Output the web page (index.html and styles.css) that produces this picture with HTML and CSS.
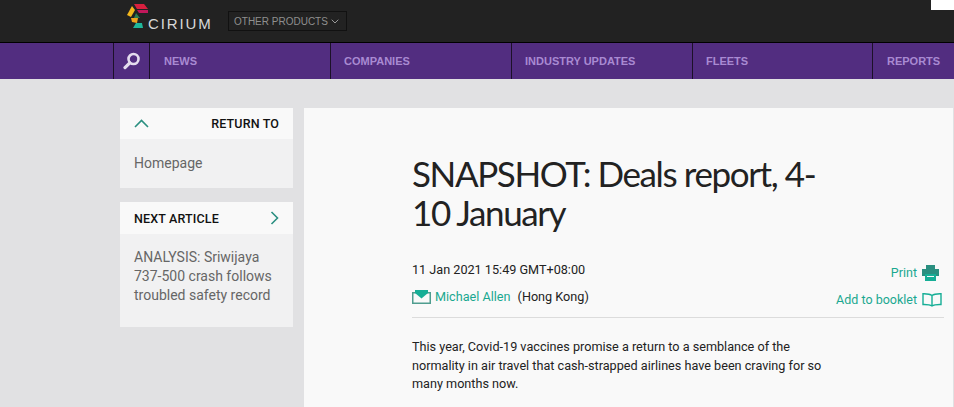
FILE: index.html
```html
<!DOCTYPE html>
<html lang="en">
<head>
  <meta charset="UTF-8" />
  <meta name="viewport" content="width=device-width, initial-scale=1" />
  <title>SNAPSHOT: Deals report, 4-10 January</title>
  <link rel="stylesheet" href="styles.css">
</head>
<body>

  <header class="topbar">
    <a class="logo">
      <svg class="logo-mark" width="22" height="25" viewBox="0 0 22 25">
        <polygon points="7,0 17,0 21,5 10,5" fill="#d8203f"/>
        <polygon points="10,6 21,6 21,9 12,9" fill="#c2185b"/>
        <polygon points="5,2 8,6 4,13 0,11" fill="#f5b81c"/>
        <polygon points="4,14 11,14 10,19 5,18" fill="#f0a31c"/>
        <polygon points="9,9 13,14 7,14" fill="#2f7d4f"/>
        <polygon points="9,19 15,19 16,24 6,24" fill="#1fb79b"/>
      </svg>
      <span class="logo-text">CIRIUM</span>
    </a>
    <div class="products">OTHER PRODUCTS
      <svg width="8" height="5" viewBox="0 0 8 5"><path d="M.7.7 4 4 7.3.7" fill="none" stroke="#999" stroke-width="1"/></svg>
    </div>
    <div class="corner-tab"></div>
  </header>

  <nav class="mainnav">
    <a class="search-cell">
      <svg width="18" height="18" viewBox="0 0 18 18">
        <circle cx="10.5" cy="7" r="5" fill="none" stroke="#e4dcee" stroke-width="2.6"/>
        <path d="M6.8 10.8 2 15.6" stroke="#e4dcee" stroke-width="3.2" stroke-linecap="round"/>
      </svg>
    </a>
    <a class="nav-item nav-news">NEWS</a>
    <a class="nav-item">COMPANIES</a>
    <a class="nav-item">INDUSTRY UPDATES</a>
    <a class="nav-item nav-fleets">FLEETS</a>
    <a class="nav-item nav-reports">REPORTS</a>
  </nav>

  <main class="page">
    <aside class="sidebar">
      <section class="side-box">
        <div class="side-head">
          <svg width="15" height="9" viewBox="0 0 15 9"><path d="M1 8 7.5 1.5 14 8" fill="none" stroke="#2a8f80" stroke-width="1.6"/></svg>
          <span>RETURN TO</span>
        </div>
        <div class="side-body">Homepage</div>
      </section>
      <section class="side-box">
        <div class="side-head next-head">
          <span>NEXT ARTICLE</span>
          <svg width="9" height="14" viewBox="0 0 9 14"><path d="M1.5 1 7.5 7 1.5 13" fill="none" stroke="#2a8f80" stroke-width="1.6"/></svg>
        </div>
        <div class="side-body next-body">ANALYSIS: Sriwijaya 737-500 crash follows troubled safety record</div>
      </section>
    </aside>

    <article class="article">
      <h1>SNAPSHOT: Deals report, 4-10 January</h1>
      <div class="meta">
        <div class="byline">
          <div class="date">11 Jan 2021 15:49 GMT+08:00</div>
          <div class="author">
            <svg width="19" height="14" viewBox="0 0 19 14">
              <rect x="0.75" y="2.75" width="17.5" height="10.5" fill="none" stroke="#4f9d8f" stroke-width="1.5"/>
              <polygon points="3,0 16,0 16,3 9.5,8.5 3,3" fill="#16ae96"/>
            </svg>
            <a class="teal">Michael Allen</a>
            <span>(Hong Kong)</span>
          </div>
        </div>
        <div class="tools">
          <a class="teal tool">Print
            <svg class="print-icon" width="17" height="16" viewBox="0 0 17 16">
              <rect x="4" y="0" width="9" height="4" fill="#2a8f80"/>
              <rect x="0" y="4" width="17" height="7" fill="#2a8f80"/>
              <rect x="3" y="9" width="11" height="7" fill="#16ae96"/>
              <rect x="5" y="11" width="7" height="1" fill="#f9f9f9"/>
            </svg>
          </a>
          <a class="teal tool">Add to booklet
            <svg width="20" height="14" viewBox="0 0 20 14">
              <path d="M10 2.5C8 1 5 .7 1 .8V11.5C5 11.4 8 11.6 10 13 12 11.6 15 11.4 19 11.5V.8C15 .7 12 1 10 2.5ZM10 2.5V13" fill="none" stroke="#16ae96" stroke-width="1.4"/>
            </svg>
          </a>
        </div>
      </div>
      <p class="lead">This year, Covid-19 vaccines promise a return to a semblance of the normality in air travel that cash-strapped airlines have been craving for so many months now.</p>
    </article>
  </main>

</body>
</html>
```

FILE: styles.css
```css
* {
  box-sizing: border-box;
}
html, body {
  height: 100%;
}
body {
  display: flex;
  flex-direction: column;
  margin: 0;
  background-color: #e1e1e3;
  font-family: Roboto, Arial, sans-serif;
  color: #222;
  overflow: hidden;
}
svg {
  display: block;
  flex: none;
}
.topbar {
  position: relative;
  display: flex;
  flex: none;
  align-items: flex-start;
  height: 43px;
  padding-left: 127px;
  background-color: #222;
  border-bottom: 1px solid #000;
}
.logo {
  display: flex;
  width: 101px;
  padding-top: 4px;
}
.logo-mark {
  margin-right: -1px;
}
.logo-text {
  margin-top: 12px;
  font-family: "Liberation Sans", Arial, sans-serif;
  font-size: 15px;
  line-height: 16px;
  letter-spacing: 1.9px;
  color: #d8d8d8;
}
.products {
  display: flex;
  align-items: center;
  justify-content: space-between;
  width: 119px;
  height: 20px;
  margin-top: 11px;
  padding: 0 7px 0 5px;
  border: 1px solid #111;
  font-family: "Liberation Sans", Arial, sans-serif;
  font-size: 10px;
  color: #8f8f8f;
}
.corner-tab {
  position: absolute;
  top: 0;
  right: 0;
  width: 23px;
  height: 10px;
  background-color: #fff;
}
.mainnav {
  display: flex;
  flex: none;
  height: 36px;
  padding-left: 113px;
  background-color: #522d80;
}
.search-cell {
  display: flex;
  flex: none;
  align-items: center;
  justify-content: center;
  width: 37px;
  border-left: 1px solid #1c1128;
  border-right: 1px solid #1c1128;
}
.nav-item {
  flex: none;
  width: 181px;
  padding-left: 13px;
  border-right: 1px solid #1c1128;
  font-family: "Liberation Sans", Arial, sans-serif;
  font-size: 11px;
  font-weight: bold;
  line-height: 36px;
  color: #a98ad2;
  white-space: nowrap;
}
.nav-news {
  padding-left: 14px;
}
.nav-fleets {
  width: 180px;
}
.nav-reports {
  flex: 1;
  width: auto;
  min-width: 0;
  padding-left: 14px;
  border-right: none;
}
.page {
  display: flex;
  flex: 1;
  min-height: 0;
  padding: 29px 0 0 120px;
}
.sidebar {
  flex: none;
  width: 173px;
  margin-right: 11px;
}
.side-box {
  margin-bottom: 14px;
  background-color: #f1f1f2;
}
.side-head {
  display: flex;
  align-items: center;
  justify-content: space-between;
  height: 31px;
  padding: 0 14px;
  background-color: #f9f9f9;
  font-size: 12.5px;
  font-weight: 500;
  letter-spacing: 0.15px;
  color: #111;
}
.next-head {
  height: 32px;
}
.side-body {
  padding: 15px 14px;
  font-size: 14px;
  line-height: 19px;
  color: #666;
}
.next-body {
  padding: 14px 14px 22px;
}
.article {
  flex: none;
  width: 649px;
  overflow: hidden;
  padding: 46px 9px 0 108px;
  background-color: #f9f9f9;
}
h1 {
  width: 420px;
  margin: 0 0 30px;
  font-family: Lato, Roboto, sans-serif;
  font-size: 35px;
  font-weight: 400;
  line-height: 39px;
  letter-spacing: -1.4px;
  color: #222;
}
.meta {
  display: flex;
  justify-content: space-between;
  height: 56px;
  border-bottom: 1px solid #dcdcdc;
}
.date {
  font-size: 12.65px;
  line-height: 16px;
}
.author {
  display: flex;
  align-items: center;
  gap: 4px;
  margin-top: 11px;
  font-size: 12.65px;
  line-height: 16px;
}
.teal {
  color: #1aa890;
}
.author span {
  margin-left: 3px;
}
.tools {
  display: flex;
  flex-direction: column;
  align-items: flex-end;
  gap: 11px;
  padding: 3px 2px 0 0;
}
.tool {
  display: flex;
  align-items: center;
  gap: 5px;
  font-size: 12.5px;
  line-height: 16px;
}
.print-icon {
  margin-right: 3px;
}
.lead {
  width: 420px;
  margin: 20px 0 0;
  font-size: 12.65px;
  line-height: 18.5px;
  color: #222;
}
```
